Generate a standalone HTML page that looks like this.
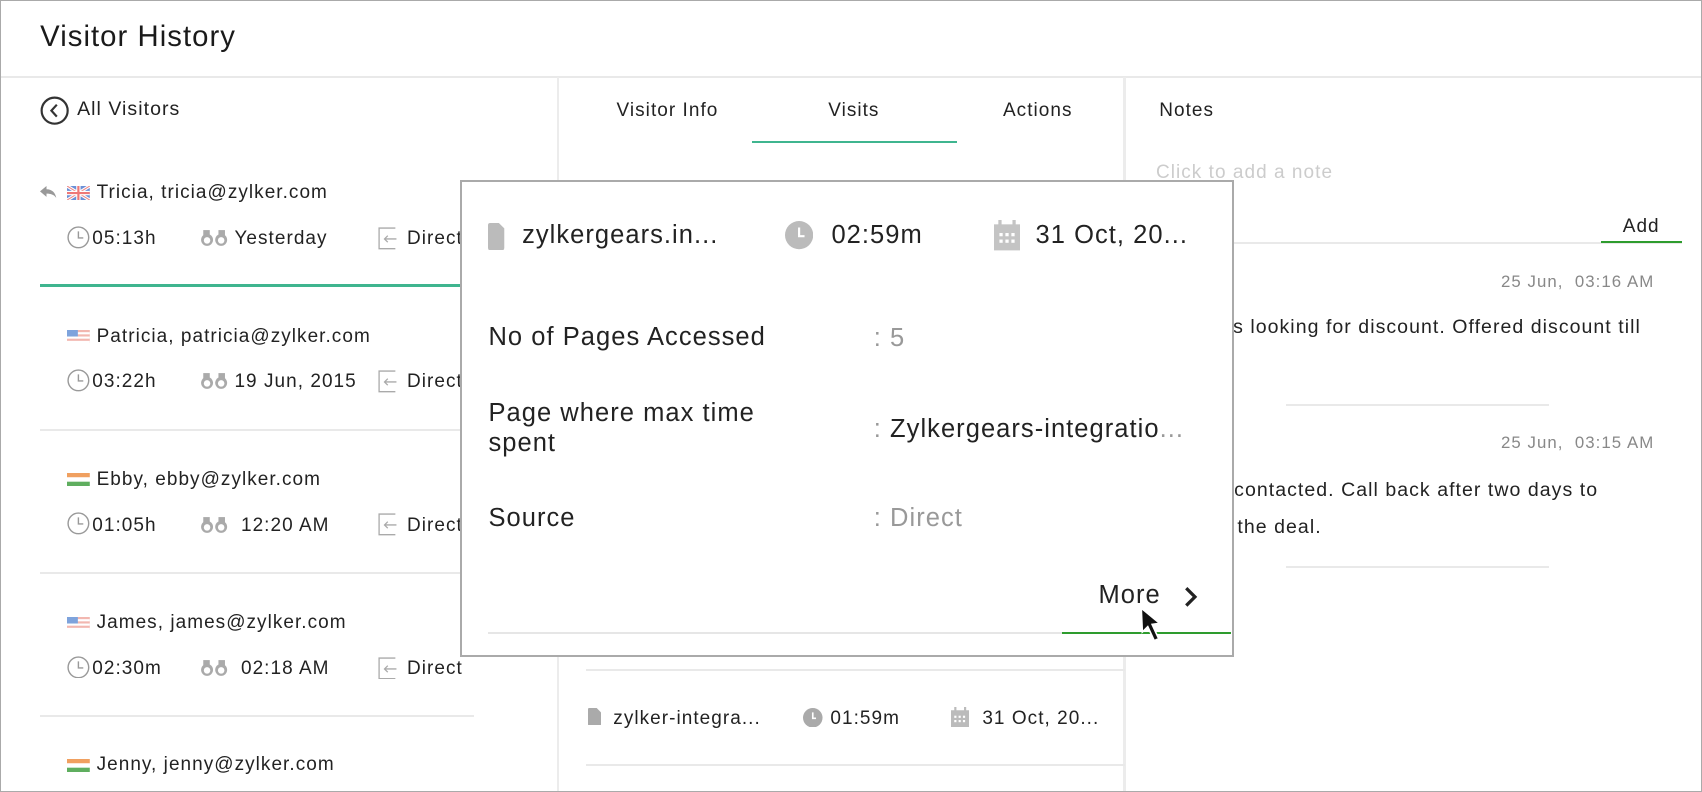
<!DOCTYPE html>
<html><head><meta charset="utf-8">
<style>
html,body{margin:0;padding:0;background:#fff;}
body{width:1568px;height:730px;zoom:1.08546;overflow:hidden;position:relative;font-family:"Liberation Sans",sans-serif;color:#222;letter-spacing:0.06em;}
.a{position:absolute;white-space:nowrap;line-height:1;}
.l{position:absolute;background:#e9e9e9;height:2px;}
.v{position:absolute;background:#ececec;width:2px;}
.t{font-size:17.5px;}
.p{font-size:23.5px;}
.g{color:#999;}
svg{position:absolute;}
</style></head><body>
<div style="position:absolute;left:0;top:0;width:1566px;height:728px;border:1px solid #aaa;"></div>
<div class="a" style="left:37px;top:20px;font-size:27px;color:#1a1a1a">Visitor History</div>
<div class="l" style="left:1px;top:70px;width:1566px;"></div>
<div class="v" style="left:513px;top:71px;height:658px;"></div>
<div class="v" style="left:1035px;top:71px;height:658px;"></div>

<svg style="left:37px;top:88px" width="27" height="27" viewBox="0 0 27 27"><circle cx="13.5" cy="13.5" r="12" fill="none" stroke="#333" stroke-width="2"/><path d="M15.5 8 L10.5 13.5 L15.5 19" fill="none" stroke="#333" stroke-width="2"/></svg>
<div class="a t" style="left:71px;top:92px;font-size:18px">All Visitors</div>

<svg style="left:37px;top:171px" width="16" height="12" viewBox="0 0 16 12"><path d="M6 0 L0 5 L6 10 V7 C10 7 13 8 15 11 C14 6 11 3 6 3 Z" fill="#999"/></svg>
<svg style="left:62px;top:171px" width="21" height="13" viewBox="0 0 21 13"><rect width="21" height="13" fill="#6b8fd6"/><path d="M0 0L21 13M21 0L0 13" stroke="#fff" stroke-width="3"/><path d="M0 0L21 13M21 0L0 13" stroke="#e88" stroke-width="1"/><path d="M10.5 0V13M0 6.5H21" stroke="#fff" stroke-width="4"/><path d="M10.5 0V13M0 6.5H21" stroke="#e77" stroke-width="2"/></svg>
<div class="a t" style="left:89px;top:169px">Tricia, tricia@zylker.com</div>

<div class="l" style="left:37px;top:262px;width:400px;background:#3fb58f"></div>
<div class="l" style="left:37px;top:395px;width:400px;"></div>
<div class="l" style="left:37px;top:527px;width:400px;"></div>
<div class="l" style="left:37px;top:659px;width:400px;"></div>

<svg style="left:62px;top:304px" width="21" height="12"><rect width="21" height="12" fill="#f2b7b0"/><rect y="2" width="21" height="2" fill="#fff"/><rect y="6" width="21" height="2" fill="#fff"/><rect y="10" width="21" height="2" fill="#fff"/><rect width="10" height="6" fill="#7ea3dc"/></svg>
<div class="a t" style="left:89px;top:301px">Patricia, patricia@zylker.com</div>
<svg style="left:62px;top:436px" width="21" height="12"><rect width="21" height="4" fill="#f0a060"/><rect y="4" width="21" height="4" fill="#fff"/><rect y="8" width="21" height="4" fill="#5fae5f"/></svg>
<div class="a t" style="left:89px;top:433px">Ebby, ebby@zylker.com</div>
<svg style="left:62px;top:568px" width="21" height="12"><rect width="21" height="12" fill="#f2b7b0"/><rect y="2" width="21" height="2" fill="#fff"/><rect y="6" width="21" height="2" fill="#fff"/><rect y="10" width="21" height="2" fill="#fff"/><rect width="10" height="6" fill="#7ea3dc"/></svg>
<div class="a t" style="left:89px;top:565px">James, james@zylker.com</div>
<svg style="left:62px;top:699px" width="21" height="12"><rect width="21" height="4" fill="#f0a060"/><rect y="4" width="21" height="4" fill="#fff"/><rect y="8" width="21" height="4" fill="#5fae5f"/></svg>
<div class="a t" style="left:89px;top:696px">Jenny, jenny@zylker.com</div>

<svg style="left:62px;top:208px" width="21" height="21"><circle cx="10.5" cy="10.5" r="9.5" fill="none" stroke="#999" stroke-width="1.3"/><path d="M10.5 5V11H15" fill="none" stroke="#999" stroke-width="1.3"/></svg>
<svg style="left:184px;top:211px" width="26" height="16"><circle cx="6.5" cy="10" r="5.5" fill="#aaa"/><circle cx="19.5" cy="10" r="5.5" fill="#aaa"/><rect x="3" y="1" width="6" height="8" fill="#aaa"/><rect x="17" y="1" width="6" height="8" fill="#aaa"/><circle cx="6.5" cy="10.5" r="3" fill="#fff"/><circle cx="19.5" cy="10.5" r="3" fill="#fff"/></svg>
<svg style="left:348px;top:209px" width="18" height="21"><path d="M16 1H1V20H16" fill="none" stroke="#aaa" stroke-width="1.2"/><path d="M17 11H6M9 8L6 11L9 14" fill="none" stroke="#aaa" stroke-width="1.2"/></svg>
<div class="a t" style="left:85px;top:211px">05:13h</div>
<div class="a t" style="left:216px;top:211px">Yesterday</div>
<div class="a t" style="left:375px;top:211px">Direct</div>

<svg style="left:62px;top:340px" width="21" height="21"><circle cx="10.5" cy="10.5" r="9.5" fill="none" stroke="#999" stroke-width="1.3"/><path d="M10.5 5V11H15" fill="none" stroke="#999" stroke-width="1.3"/></svg>
<svg style="left:184px;top:343px" width="26" height="16"><circle cx="6.5" cy="10" r="5.5" fill="#aaa"/><circle cx="19.5" cy="10" r="5.5" fill="#aaa"/><rect x="3" y="1" width="6" height="8" fill="#aaa"/><rect x="17" y="1" width="6" height="8" fill="#aaa"/><circle cx="6.5" cy="10.5" r="3" fill="#fff"/><circle cx="19.5" cy="10.5" r="3" fill="#fff"/></svg>
<svg style="left:348px;top:341px" width="18" height="21"><path d="M16 1H1V20H16" fill="none" stroke="#aaa" stroke-width="1.2"/><path d="M17 11H6M9 8L6 11L9 14" fill="none" stroke="#aaa" stroke-width="1.2"/></svg>
<div class="a t" style="left:85px;top:343px">03:22h</div>
<div class="a t" style="left:216px;top:343px">19 Jun, 2015</div>
<div class="a t" style="left:375px;top:343px">Direct</div>

<svg style="left:62px;top:472px" width="21" height="21"><circle cx="10.5" cy="10.5" r="9.5" fill="none" stroke="#999" stroke-width="1.3"/><path d="M10.5 5V11H15" fill="none" stroke="#999" stroke-width="1.3"/></svg>
<svg style="left:184px;top:475px" width="26" height="16"><circle cx="6.5" cy="10" r="5.5" fill="#aaa"/><circle cx="19.5" cy="10" r="5.5" fill="#aaa"/><rect x="3" y="1" width="6" height="8" fill="#aaa"/><rect x="17" y="1" width="6" height="8" fill="#aaa"/><circle cx="6.5" cy="10.5" r="3" fill="#fff"/><circle cx="19.5" cy="10.5" r="3" fill="#fff"/></svg>
<svg style="left:348px;top:473px" width="18" height="21"><path d="M16 1H1V20H16" fill="none" stroke="#aaa" stroke-width="1.2"/><path d="M17 11H6M9 8L6 11L9 14" fill="none" stroke="#aaa" stroke-width="1.2"/></svg>
<div class="a t" style="left:85px;top:475px">01:05h</div>
<div class="a t" style="left:222px;top:475px">12:20 AM</div>
<div class="a t" style="left:375px;top:475px">Direct</div>

<svg style="left:62px;top:604px" width="21" height="21"><circle cx="10.5" cy="10.5" r="9.5" fill="none" stroke="#999" stroke-width="1.3"/><path d="M10.5 5V11H15" fill="none" stroke="#999" stroke-width="1.3"/></svg>
<svg style="left:184px;top:607px" width="26" height="16"><circle cx="6.5" cy="10" r="5.5" fill="#aaa"/><circle cx="19.5" cy="10" r="5.5" fill="#aaa"/><rect x="3" y="1" width="6" height="8" fill="#aaa"/><rect x="17" y="1" width="6" height="8" fill="#aaa"/><circle cx="6.5" cy="10.5" r="3" fill="#fff"/><circle cx="19.5" cy="10.5" r="3" fill="#fff"/></svg>
<svg style="left:348px;top:605px" width="18" height="21"><path d="M16 1H1V20H16" fill="none" stroke="#aaa" stroke-width="1.2"/><path d="M17 11H6M9 8L6 11L9 14" fill="none" stroke="#aaa" stroke-width="1.2"/></svg>
<div class="a t" style="left:85px;top:607px">02:30m</div>
<div class="a t" style="left:222px;top:607px">02:18 AM</div>
<div class="a t" style="left:375px;top:607px">Direct</div>

<div class="a t" style="left:568px;top:93px">Visitor Info</div>
<div class="a t" style="left:763px;top:93px">Visits</div>
<div class="a t" style="left:924px;top:93px">Actions</div>
<div class="l" style="left:693px;top:130px;width:189px;background:#3fb58f"></div>
<div class="l" style="left:540px;top:616px;width:496px;"></div>
<div class="l" style="left:540px;top:704px;width:496px;"></div>
<svg style="left:542px;top:652px" width="12" height="16"><path d="M0 1Q0 0 1 0H8L12 4V15Q12 16 11 16H1Q0 16 0 15Z" fill="#aaa"/></svg>
<div class="a" style="left:565px;top:653px;font-size:17.5px">zylker-integra...</div>
<svg style="left:740px;top:652px" width="18" height="18"><circle cx="9" cy="9" r="9" fill="#aaa"/><path d="M9 4V9.5H12" fill="none" stroke="#fff" stroke-width="1.5"/></svg>
<div class="a" style="left:765px;top:653px;font-size:17.5px">01:59m</div>
<svg style="left:876px;top:651px" width="17" height="19"><rect y="3" width="17" height="16" fill="#bbb"/><rect x="3" y="0" width="2" height="5" fill="#bbb"/><rect x="12" y="0" width="2" height="5" fill="#bbb"/><g fill="#fff"><rect x="3" y="8" width="2" height="2"/><rect x="7" y="8" width="2" height="2"/><rect x="11" y="8" width="2" height="2"/><rect x="3" y="12" width="2" height="2"/><rect x="7" y="12" width="2" height="2"/><rect x="11" y="12" width="2" height="2"/></g></svg>
<div class="a" style="left:905px;top:653px;font-size:17.5px">31 Oct, 20...</div>

<div class="a t" style="left:1068px;top:93px">Notes</div>
<div class="a" style="left:1065px;top:150px;font-size:17.5px;color:#ccc">Click to add a note</div>
<div class="l" style="left:1036px;top:223px;width:514px;"></div>
<div class="a t" style="left:1495px;top:200px">Add</div>
<div class="l" style="left:1475px;top:222px;width:75px;background:#2e9c2e"></div>
<div class="a" style="right:44px;top:252px;font-size:15.5px;color:#888">25 Jun,&nbsp; 03:16 AM</div>
<div class="a" style="left:1136px;top:293px;font-size:18px">s looking for discount. Offered discount till</div>
<div class="l" style="left:1185px;top:372px;width:242px;"></div>
<div class="a" style="right:44px;top:401px;font-size:15.5px;color:#888">25 Jun,&nbsp; 03:15 AM</div>
<div class="a" style="left:1137px;top:443px;font-size:18px">contacted. Call back after two days to</div>
<div class="a" style="left:1140px;top:477px;font-size:18px">the deal.</div>
<div class="l" style="left:1185px;top:521px;width:242px;"></div>

<div style="position:absolute;left:424px;top:166px;width:709px;height:436px;border:2px solid #aaa;background:#fff;"></div>
<svg style="left:450px;top:205px" width="15" height="25"><path d="M0 2Q0 0 2 0H10L15 5V23Q15 25 13 25H2Q0 25 0 23Z" fill="#bbb"/></svg>
<div class="a p" style="left:481px;top:205px">zylkergears.in...</div>
<svg style="left:723px;top:204px" width="26" height="26"><circle cx="13" cy="13" r="13" fill="#bbb"/><path d="M13 6V14H18" fill="none" stroke="#fff" stroke-width="2"/></svg>
<div class="a p" style="left:766px;top:205px">02:59m</div>
<svg style="left:916px;top:203px" width="24" height="28"><rect y="4" width="24" height="24" fill="#c4c4c4"/><rect x="4" y="0" width="3" height="7" fill="#c4c4c4"/><rect x="17" y="0" width="3" height="7" fill="#c4c4c4"/><g fill="#fff"><rect x="5" y="12" width="3" height="3"/><rect x="10.5" y="12" width="3" height="3"/><rect x="16" y="12" width="3" height="3"/><rect x="5" y="18" width="3" height="3"/><rect x="10.5" y="18" width="3" height="3"/><rect x="16" y="18" width="3" height="3"/></g></svg>
<div class="a p" style="left:954px;top:205px">31 Oct, 20...</div>

<div class="a p" style="left:450px;top:299px">No of Pages Accessed</div>
<div class="a g p" style="left:805px;top:300px">: 5</div>
<div class="a p" style="left:450px;top:369px">Page where max time</div>
<div class="a p" style="left:450px;top:397px">spent</div>
<div class="a p" style="left:805px;top:384px"><span class="g">: </span>Zylkergears-integratio<span class="g">...</span></div>
<div class="a p" style="left:450px;top:466px">Source</div>
<div class="a g p" style="left:805px;top:466px">: Direct</div>
<div class="a p" style="left:1012px;top:537px">More</div>
<svg style="left:1090px;top:540px" width="14" height="20"><path d="M3 2L11 10L3 18" fill="none" stroke="#222" stroke-width="3"/></svg>
<div class="l" style="left:450px;top:582px;width:684px;background:#e6e6e6"></div>
<div class="l" style="left:978px;top:582px;width:156px;background:#2e9c2e"></div>
<svg style="left:1048px;top:558px" width="30" height="36"><path d="M3 2L4 24L9 19L15 32L19 30L13 17L20 16Z" fill="#111" stroke="#fff" stroke-width="1.5"/></svg>
</body></html>
